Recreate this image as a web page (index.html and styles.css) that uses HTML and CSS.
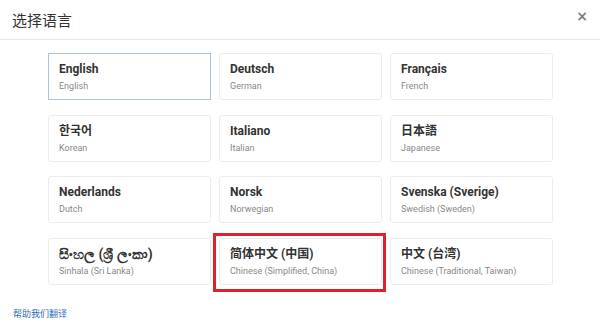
FILE: index.html
```html
<!DOCTYPE html>
<html lang="zh-CN">
<head>
    <meta charset="UTF-8">
    <meta name="viewport" content="width=device-width, initial-scale=1.0">
    <title>选择语言</title>
    <link rel="stylesheet" href="styles.css">
</head>
<body>
    <div class="modal">
        <div class="modal-header">
            <h4 class="modal-title">选择语言</h4>
            <button class="close" type="button">&times;</button>
        </div>

        <div class="modal-body">
            <div class="lang-grid">
                <a class="lang-card active" href="#">
                    <span class="lang-name">English</span>
                    <span class="lang-sub">English</span>
                </a>
                <a class="lang-card" href="#">
                    <span class="lang-name">Deutsch</span>
                    <span class="lang-sub">German</span>
                </a>
                <a class="lang-card" href="#">
                    <span class="lang-name">Français</span>
                    <span class="lang-sub">French</span>
                </a>
                <a class="lang-card" href="#">
                    <span class="lang-name">한국어</span>
                    <span class="lang-sub">Korean</span>
                </a>
                <a class="lang-card" href="#">
                    <span class="lang-name">Italiano</span>
                    <span class="lang-sub">Italian</span>
                </a>
                <a class="lang-card" href="#">
                    <span class="lang-name">日本語</span>
                    <span class="lang-sub">Japanese</span>
                </a>
                <a class="lang-card" href="#">
                    <span class="lang-name">Nederlands</span>
                    <span class="lang-sub">Dutch</span>
                </a>
                <a class="lang-card" href="#">
                    <span class="lang-name">Norsk</span>
                    <span class="lang-sub">Norwegian</span>
                </a>
                <a class="lang-card" href="#">
                    <span class="lang-name">Svenska (Sverige)</span>
                    <span class="lang-sub">Swedish (Sweden)</span>
                </a>
                <a class="lang-card" href="#">
                    <span class="lang-name sinhala">සිංහල (ශ්‍රී ලංකා)</span>
                    <span class="lang-sub">Sinhala (Sri Lanka)</span>
                </a>
                <a class="lang-card marked" href="#">
                    <span class="lang-name">简体中文 (中国)</span>
                    <span class="lang-sub">Chinese (Simplified, China)</span>
                </a>
                <a class="lang-card" href="#">
                    <span class="lang-name">中文 (台湾)</span>
                    <span class="lang-sub">Chinese (Traditional, Taiwan)</span>
                </a>
            </div>

            <a class="help-link" href="#">帮助我们翻译</a>
        </div>
    </div>
</body>
</html>
```

FILE: styles.css
```css
body {
    margin: 0;
    padding: 0;
    background-color: #fff;
    font-family: Roboto, "Noto Sans CJK SC", "Noto Sans", sans-serif;
    color: #333;
}

.modal-header {
    display: flex;
    align-items: center;
    justify-content: space-between;
    height: 39px;
    padding: 0 12px 0 12px;
    border-bottom: 1px solid #e8e8e8;
}

.modal-title {
    margin: 0;
    font-family: "Noto Sans CJK SC", sans-serif;
    font-size: 15px;
    font-weight: normal;
    color: #333;
}

/* bootstrap-like close */
.close {
    background: none;
    border: none;
    padding: 0;
    margin-top: -8px;
    margin-right: 0;
    font-family: "DejaVu Sans", sans-serif;
    font-size: 14px;
    font-weight: bold;
    line-height: 1;
    color: #000;
    opacity: 0.5;
    cursor: pointer;
}

.modal-body {
    padding: 13px 12px 0 12px;
}

.lang-grid {
    display: grid;
    grid-template-columns: repeat(3, 163px);
    grid-auto-rows: 47px;
    column-gap: 8px;
    row-gap: 14.5px;
    padding-left: 36px;
}

.lang-card {
    position: relative;
    display: flex;
    flex-direction: column;
    padding: 6px 10px 0 10px;
    border: 1px solid #ececec;
    border-radius: 3px;
    text-decoration: none;
    box-sizing: border-box;
}

.lang-card.active {
    border-color: #a9c3e6;
    border-radius: 0;
}

.lang-name {
    font-size: 12px;
    font-weight: bold;
    color: #333;
    line-height: 18px;
}

.lang-name.sinhala {
    font-size: 14px;
}

.lang-sub {
    font-size: 9px;
    color: #888;
    line-height: 14px;
    margin-top: 1px;
}

/* red annotation frame */
.lang-card.marked::after {
    content: "";
    position: absolute;
    left: -7px;
    top: -6px;
    right: -5px;
    bottom: -8px;
    border: 3px solid #e0202a;
}

.help-link {
    display: inline-block;
    margin-top: 22px;
    margin-left: 1px;
    font-family: "Noto Sans CJK SC", sans-serif;
    font-size: 9px;
    color: #2a6db5;
    text-decoration: none;
}
```
